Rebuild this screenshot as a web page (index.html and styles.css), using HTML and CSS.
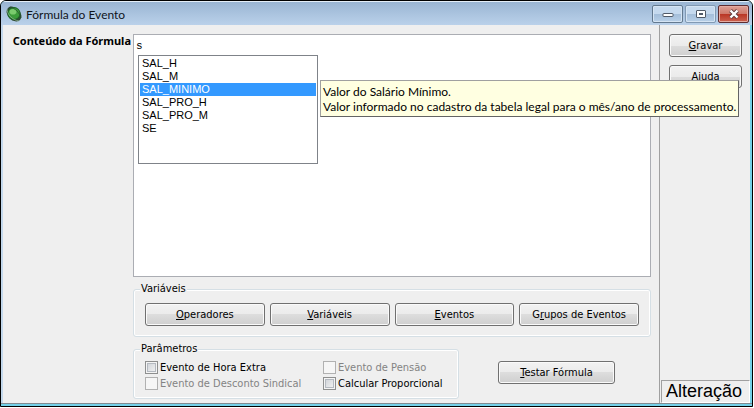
FILE: index.html
```html
<!DOCTYPE html>
<html lang="pt-BR">
<head>
    <meta charset="UTF-8">
    <meta name="viewport" content="width=device-width, initial-scale=1.0">
    <title>Fórmula do Evento</title>
    <link rel="stylesheet" href="styles.css">
</head>
<body>
    <div class="window">
        <header class="titlebar">
            <svg class="app-icon" width="16" height="16" viewBox="0 0 16 16">
                <ellipse cx="8" cy="8" rx="8.500" ry="6.200" transform="rotate(45 8 8)" fill="#2c4a32"/>
                <circle cx="8" cy="7.500" r="6.500" fill="#1f6b27"/>
                <circle cx="8" cy="7.400" r="5.500" fill="#3c9c3a"/>
                <ellipse cx="7" cy="5.800" rx="3.500" ry="2.800" fill="#7acb6d"/>
                <path d="M1 3C1 8 6 14 13 15" fill="none" stroke="#8fb093" stroke-width=".8"/>
                <path d="M4 1C9 2 14 7 15 12" fill="none" stroke="#28502e" stroke-width=".8"/>
            </svg>
            <h1 class="title">Fórmula do Evento</h1>
            <div class="window-buttons">
                <button type="button" class="win-btn" aria-label="Minimizar">
                    <svg width="12" height="10" viewBox="0 0 12 10"><rect x="1" y="4.500" width="10" height="3" rx=".5" fill="#fff" stroke="#505a68"/></svg>
                </button>
                <button type="button" class="win-btn win-btn-max" aria-label="Maximizar">
                    <svg width="12" height="10" viewBox="0 0 12 10"><rect x="1.500" y="1.500" width="9" height="7" rx=".5" fill="#fff" stroke="#505a68"/><rect x="4.500" y="4.500" width="3" height="1" fill="#a9c2e0" stroke="#505a68"/></svg>
                </button>
                <button type="button" class="win-btn win-btn-close" aria-label="Fechar">
                    <svg width="12" height="10" viewBox="0 0 12 10"><path d="M2.500 1.500L9.500 8.500M9.500 1.500L2.500 8.500" stroke="#5c3a3c" stroke-width="4"/><path d="M2.500 1.500L9.500 8.500M9.500 1.500L2.500 8.500" stroke="#fff" stroke-width="2.400"/></svg>
                </button>
            </div>
        </header>

        <main class="content">
            <label class="formula-label" for="formula">Conteúdo da Fórmula</label>

            <div class="form">
                <div class="editor">
                    <textarea id="formula" class="formula" spellcheck="false">s</textarea>
                    <!-- lista de sugestões -->
                    <div class="suggestions">
                        <select class="suggestion-list" size="6" aria-label="Sugestões">
                            <option>SAL_H</option>
                            <option>SAL_M</option>
                            <option selected>SAL_MINIMO</option>
                            <option>SAL_PRO_H</option>
                            <option>SAL_PRO_M</option>
                            <option>SE</option>
                        </select>
                    </div>
                    <div class="tooltip" role="tooltip">Valor do Salário Mínimo.<br>Valor informado no cadastro da tabela legal para o mês/ano de processamento.</div>
                </div>

                <fieldset class="group">
                    <legend>Variáveis</legend>
                    <div class="variables">
                        <button type="button" class="btn"><u>O</u>peradores</button>
                        <button type="button" class="btn"><u>V</u>ariáveis</button>
                        <button type="button" class="btn"><u>E</u>ventos</button>
                        <button type="button" class="btn">G<u>r</u>upos de Eventos</button>
                    </div>
                </fieldset>

                <div class="bottom">
                    <fieldset class="group group-params">
                        <legend>Parâmetros</legend>
                        <div class="params">
                            <label class="check"><input type="checkbox">Evento de Hora Extra</label>
                            <label class="check disabled"><input type="checkbox" disabled>Evento de Pensão</label>
                            <label class="check disabled"><input type="checkbox" disabled>Evento de Desconto Sindical</label>
                            <label class="check"><input type="checkbox">Calcular Proporcional</label>
                        </div>
                    </fieldset>
                    <div class="test">
                        <button type="button" class="btn btn-test"><u>T</u>estar Fórmula</button>
                    </div>
                </div>
            </div>

            <aside class="side">
                <div class="side-buttons">
                    <button type="button" class="btn"><u>G</u>ravar</button>
                    <button type="button" class="btn">Aj<u>u</u>da</button>
                </div>
                <div class="status">Alteração</div>
            </aside>
        </main>
    </div>
</body>
</html>
```

FILE: styles.css
```css
* {
    box-sizing: border-box;
}
body {
    margin: 0;
    padding: 0 1px 1px 0;
    height: 100vh;
    background-color: white;
    font-family: "DejaVu Sans Condensed", "Noto Sans", sans-serif;
    font-size: 11px;
    line-height: 14px;
    color: black;
}
.window {
    display: flex;
    flex-direction: column;
    height: 100%;
    border: 1px solid black;
    border-radius: 6px 6px 0 0;
    background-color: #73d0e8;
    padding-bottom: 2px;
    overflow: hidden;
}

/* barra de título */
.titlebar {
    display: flex;
    align-items: center;
    height: 24px;
    flex: none;
    padding: 0 3px 0 5px;
    gap: 4px;
    border-top: 1px solid #e4eef8;
    background: linear-gradient(#9ab5d3, #bad1ea);
}
.title {
    flex: 1;
    margin: 0;
    padding-top: 2px;
    font-family: Lato, sans-serif;
    font-size: 12px;
    font-weight: normal;
    line-height: 18px;
    color: #10151c;
}
.window-buttons {
    display: flex;
    gap: 2px;
}
.win-btn {
    display: flex;
    align-items: center;
    justify-content: center;
    width: 31px;
    height: 18px;
    padding: 0;
    border: 1px solid #63798f;
    border-radius: 2px;
    background: linear-gradient(#c5d9ee 50%, #a3bdd9 50%, #b8d0e8);
    box-shadow: inset 0 0 0 1px #d5e4f3;
}
.win-btn-max {
    border-color: #8199b3;
}
.win-btn-close {
    border-color: #5e2d31;
    background: linear-gradient(#dda096, #ce7869 50%, #b93524 50%, #cc6250);
    box-shadow: inset 0 0 0 1px #e4aaa0;
}

/* conteúdo */
.content {
    display: flex;
    flex: 1;
    min-height: 0;
    border-left: 2px solid #c3d8ec;
    border-right: 2px solid #73d0e8;
    background-color: #efefef;
    box-shadow: 0 1px 0 #808a90;
    margin-bottom: 1px;
}
.formula-label {
    width: 130px;
    flex: none;
    padding: 9px 2px 0 0;
    font-family: "Noto Sans", sans-serif;
    font-weight: bold;
    text-align: right;
    white-space: nowrap;
}
.form {
    display: flex;
    flex-direction: column;
    flex: 1;
    min-width: 0;
    padding: 9px 8px 4px 0;
}
.editor {
    position: relative;
    flex: 1;
    min-height: 0;
}
.formula {
    display: block;
    width: 100%;
    height: 100%;
    padding: 4px 2px;
    border: 1px solid #abadb3;
    background-color: white;
    font-family: "Liberation Mono", monospace;
    font-size: 11px;
    line-height: 14px;
    resize: none;
    outline: none;
}
.suggestions {
    position: absolute;
    left: 5px;
    top: 21px;
    width: 180px;
    height: 109px;
    padding: 1px;
    border: 1px solid #7f8389;
    background-color: white;
}
.suggestion-list {
    display: block;
    width: 100%;
    height: 100%;
    padding: 0;
    border: 0;
    background-color: white;
    font-family: "Liberation Sans", Arial, sans-serif;
    font-size: 11px;
    overflow: hidden;
    outline: none;
}
.suggestion-list option {
    min-height: 13px;
    padding: 0 2px;
    line-height: 13px;
    color: black;
}
.suggestion-list option:checked {
    background: linear-gradient(#3399ff, #3399ff);
    -webkit-text-fill-color: white;
}
.tooltip {
    position: absolute;
    left: 187px;
    top: 46px;
    z-index: 1;
    padding: 3px 2px 2px;
    border: 1px solid #646464;
    border-top-color: #a0a0a0;
    border-left-color: #a0a0a0;
    background-color: #ffffe1;
    font-family: Lato, sans-serif;
    font-size: 12px;
    line-height: 15px;
    white-space: nowrap;
}

/* grupos */
.group {
    margin: 5px 0 0 0;
    padding: 7px 11px 10px;
    min-width: 0;
    border: 1px solid #d5dfe5;
    border-radius: 3px;
    box-shadow: inset 0 0 0 1px white;
}
.group legend {
    margin-left: -5px;
    padding: 0 1px;
    background-color: #efefef;
}
.variables {
    display: grid;
    grid-template-columns: repeat(4, 1fr);
    gap: 5px;
}
.btn {
    height: 23px;
    padding: 0 4px;
    border: 1px solid #707070;
    border-radius: 3px;
    background: linear-gradient(#f2f2f2, #ebebeb 50%, #dddddd 50%, #cfcfcf);
    box-shadow: inset 0 0 0 1px #fafafa;
    font-family: inherit;
    font-size: 11px;
    line-height: 14px;
    color: black;
    white-space: nowrap;
}
.bottom {
    display: flex;
}
.group-params {
    width: 326px;
    padding: 4px 11px 7px;
}
.params {
    display: grid;
    grid-template-columns: 178px auto;
    row-gap: 1px;
}
.check {
    display: flex;
    align-items: center;
    gap: 2px;
    height: 15px;
    white-space: nowrap;
}
.check input {
    appearance: none;
    flex: none;
    width: 13px;
    height: 13px;
    margin: 0;
    border: 1px solid #8e8f8f;
    background: linear-gradient(135deg, #cbcfd5, #f6f6f6);
    box-shadow: inset 0 0 0 1px #f4f4f4, inset 0 0 0 2px #b4b9c0;
}
.check input:disabled {
    border-color: #b1b1b1;
    background: #f6f6f6;
    box-shadow: none;
}
.disabled {
    color: #838383;
}
.test {
    flex: 1;
    padding: 24px 0 0 39px;
}
.btn-test {
    width: 117px;
}

/* lateral */
.side {
    display: flex;
    flex-direction: column;
    justify-content: space-between;
    width: 91px;
    flex: none;
    border-left: 1px solid #a0a0a0;
}
.side-buttons {
    display: flex;
    flex-direction: column;
    gap: 8px;
    padding: 9px 8px 0 9px;
}
.status {
    margin-left: 1px;
    padding: 0 4px;
    border: 1px solid #a0a0a0;
    border-right-color: white;
    border-bottom-color: white;
    font-family: "Liberation Sans", Arial, sans-serif;
    font-size: 18px;
    line-height: 21px;
}
```
